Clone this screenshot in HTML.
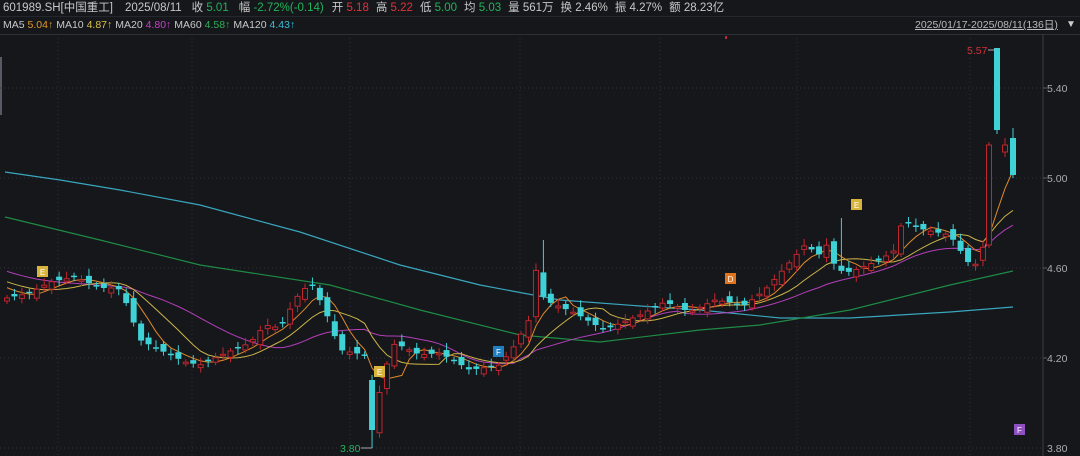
<!DOCTYPE html>
<html><head><meta charset="utf-8"><style>
body{margin:0;width:1080px;height:456px;background:#15171b;overflow:hidden;font-family:"Liberation Sans","Noto Sans CJK SC",sans-serif;}
.h1{position:absolute;left:0;top:0;width:1080px;height:16px;background:#15171b;font-size:11.5px;line-height:16px;color:#c8c8c8;white-space:nowrap}
.h2{position:absolute;left:0;top:16px;width:1080px;height:17px;background:#15171b;border-top:1px solid #24272d;border-bottom:1px solid #2c2f35;font-size:10.5px;line-height:16px;color:#c8c8c8;white-space:nowrap}
span{display:inline-block}
.r{color:#e2323a}.g{color:#22b35a}.y{color:#e39a2a}.yl{color:#d8c14a}.p{color:#c640c8}.gr{color:#2fae58}.c{color:#3cbcd8}
b{font-weight:normal}
</style></head><body>
<div class="h1"><span style="margin-left:3px">601989.SH[中国重工]</span><span style="margin-left:12px">2025/08/11</span><span style="margin-left:10px">收 <b class="g">5.01</b></span><span style="margin-left:10px">幅 <b class="g">-2.72%(-0.14)</b></span><span style="margin-left:8px">开 <b class="r">5.18</b></span><span style="margin-left:7px">高 <b class="r">5.22</b></span><span style="margin-left:7px">低 <b class="g">5.00</b></span><span style="margin-left:7px">均 <b class="g">5.03</b></span><span style="margin-left:7px">量 561万</span><span style="margin-left:7px">换 2.46%</span><span style="margin-left:7px">振 4.27%</span><span style="margin-left:7px">额 28.23亿</span></div>
<div class="h2"><span style="margin-left:3px">MA5 <b class="y">5.04↑</b></span><span style="margin-left:3px">MA10 <b class="yl">4.87↑</b></span><span style="margin-left:3px">MA20 <b class="p">4.80↑</b></span><span style="margin-left:3px">MA60 <b class="gr">4.58↑</b></span><span style="margin-left:3px">MA120 <b class="c">4.43↑</b></span>
<span style="position:absolute;left:915px;top:0;text-decoration:underline;color:#bbb">2025/01/17-2025/08/11(136日)</span><span style="position:absolute;left:1066px;top:0;color:#ccc;font-size:10px">▼</span></div>
<svg id="s" width="1080" height="456" style="position:absolute;left:0;top:0" xmlns="http://www.w3.org/2000/svg">
<rect x="0" y="57" width="2" height="58" fill="#555a63"/>
<line x1="1043" y1="34" x2="1043" y2="456" stroke="#3a3d44"/>
<g stroke="#2e3137" stroke-dasharray="1,3">
<line x1="0" y1="88" x2="1043" y2="88"/><line x1="0" y1="178" x2="1043" y2="178"/><line x1="0" y1="268" x2="1043" y2="268"/><line x1="0" y1="358" x2="1043" y2="358"/><line x1="0" y1="448" x2="1043" y2="448"/>
<line x1="58" y1="34" x2="58" y2="456"/><line x1="192" y1="34" x2="192" y2="456"/><line x1="350" y1="34" x2="350" y2="456"/><line x1="520" y1="34" x2="520" y2="456"/><line x1="660" y1="34" x2="660" y2="456"/><line x1="797" y1="34" x2="797" y2="456"/><line x1="970" y1="34" x2="970" y2="456"/>
</g>
<g font-size="10.5" fill="#a9abb0">
<text x="1047" y="92">5.40</text><text x="1047" y="182">5.00</text><text x="1047" y="272">4.60</text><text x="1047" y="362">4.20</text><text x="1047" y="452">3.80</text>
</g>
<g stroke="#55585e"><line x1="1043" y1="88" x2="1047" y2="88"/><line x1="1043" y1="178" x2="1047" y2="178"/><line x1="1043" y1="268" x2="1047" y2="268"/><line x1="1043" y1="358" x2="1047" y2="358"/></g>
<polyline fill="none" stroke="#3aa6bd" stroke-width="1.2" points="5,172 60,180 120,190 200,205 300,232 400,265 480,285 560,300 640,306 700,310 780,318 850,318 950,312 1013,307"/>
<polyline fill="none" stroke="#1f8a45" stroke-width="1.2" points="5,217 100,240 200,265 330,285 420,310 520,335 600,342 700,330 760,325 850,310 950,285 1013,271"/>
<g id="ma"></g><g id="cd"></g>
<rect x="725" y="36" width="2" height="3" fill="#c0262e"/>
<text x="967" y="54" font-size="10.5" fill="#d0323a">5.57</text><line x1="988" y1="50" x2="996" y2="50" stroke="#aaa"/>
<text x="340" y="452" font-size="10.5" fill="#22b35a">3.80</text><line x1="361" y1="448" x2="372" y2="448" stroke="#aaa"/>
<g font-size="8" text-anchor="middle" fill="#fff">
<rect x="37" y="266" width="11" height="11" fill="#d9b43a"/><text x="42.5" y="275">E</text>
<rect x="374" y="366" width="11" height="11" fill="#d9b43a"/><text x="379.5" y="375">E</text>
<rect x="493" y="346" width="11" height="11" fill="#1f7fc0"/><text x="498.5" y="355">F</text>
<rect x="725" y="273" width="11" height="11" fill="#e0731e"/><text x="730.5" y="282">D</text>
<rect x="851" y="199" width="11" height="11" fill="#d9b43a"/><text x="856.5" y="208">E</text>
<rect x="1014" y="424" width="11" height="11" fill="#8e4fc0"/><text x="1019.5" y="433">F</text>
</g>
</svg>
<script>
var K=[[7,298],[30,293],[50,282],[75,277],[100,288],[118,288],[125,300],[132,318],[140,340],[160,350],[185,362],[200,365],[228,352],[250,343],[265,325],[280,328],[295,300],[302,290],[312,285],[325,310],[340,350],[365,355],[372,430],[380,390],[388,360],[395,343],[420,355],[440,353],[470,370],[500,365],[515,345],[530,318],[537,262],[544,300],[575,313],[604,330],[640,315],[665,302],[690,312],[715,300],[745,305],[765,290],[790,262],[805,245],[820,255],[830,240],[835,270],[850,272],[880,260],[895,250],[903,218],[910,225],[925,230],[950,235],[968,262],[978,265],[985,240],[991,145],[998,130],[1006,148],[1013,175]];
function iy(x){for(var i=0;i<K.length-1;i++){if(x<=K[i+1][0]){var t=(x-K[i][0])/(K[i+1][0]-K[i][0]);return K[i][1]+t*(K[i+1][1]-K[i][1]);}}return K[K.length-1][1];}
var N=136,C=[],X=[];for(var i=0;i<N;i++){X.push(7+7.45*i);C.push(iy(X[i]));}
X[132]=989;X[133]=997;X[134]=1005;X[135]=1013;
var out='';var jit=[3,-4,2,-3,5,-2,4,-5,1,-3];
for(var i=0;i<N;i++){var o=i?C[i-1]+jit[i%10]:C[0]+3,c=C[i];
 if(i==49){o=380;c=430;}
 if(i==132){o=245;c=145;} if(i==133){o=48;c=130;} if(i==134){o=152;c=145;} if(i==135){o=138;c=175;}
 var t=Math.min(o,c),b=Math.max(o,c);if(b-t<1.5)b=t+1.5;
 var hi=t-3-(i%3)*2,lo=b+3+(i%4);if(i==49)lo=448;if(i==133)hi=48;if(i==72)hi=240;if(i==112)hi=218;if(i==135){hi=128;lo=178;}
 var up=c<o,col=up?'#c0262e':'#3ed1d6',x=X[i];
 out+='<line x1="'+x+'" y1="'+hi+'" x2="'+x+'" y2="'+lo+'" stroke="'+col+'"/>';
 if(up)out+='<rect x="'+(x-2.5)+'" y="'+t+'" width="5" height="'+(b-t)+'" fill="#15171b" stroke="'+col+'"/>';
 else out+='<rect x="'+(x-3)+'" y="'+t+'" width="6" height="'+(b-t)+'" fill="'+col+'"/>';}
document.getElementById('cd').innerHTML=out;
var P=[];for(var i=0;i<20;i++)P.push(250+i*2);var A=P.concat(C);
function ma(n,col){var pts=[];for(var i=0;i<N;i++){var s=0;for(var k=0;k<n;k++)s+=A[i+20-k];pts.push(X[i].toFixed(1)+','+(s/n).toFixed(1));}return '<polyline fill="none" stroke="'+col+'" stroke-width="1" points="'+pts.join(' ')+'"/>';}
document.getElementById('ma').innerHTML=ma(20,'#b33fb8')+ma(10,'#cdb548')+ma(5,'#e08a2a');
</script>
</body></html>
